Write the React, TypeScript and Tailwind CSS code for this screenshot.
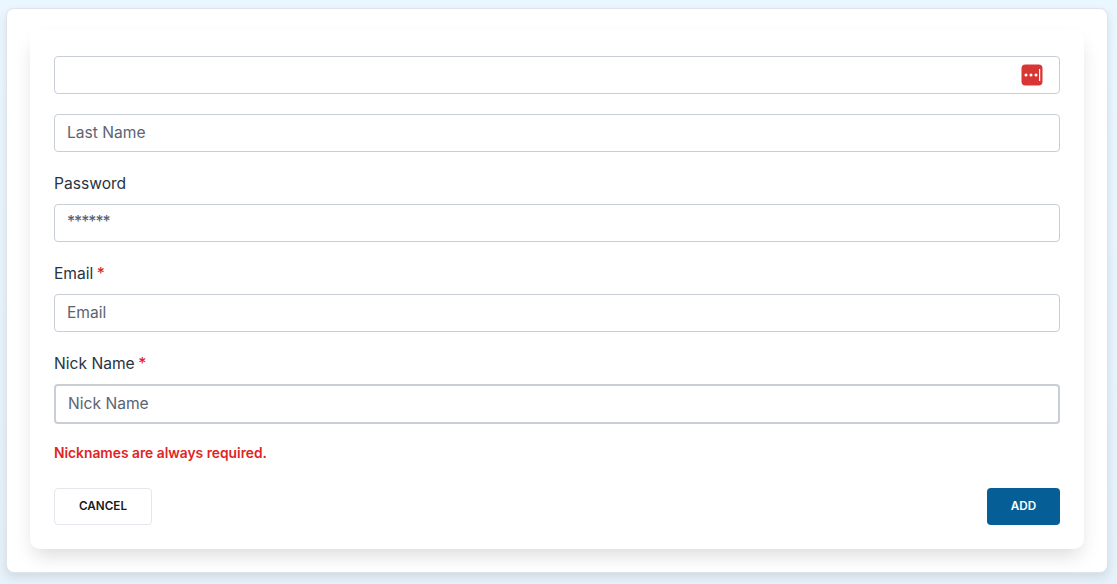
import React from "react";

const fieldFont = "font-['Inter','Liberation_Sans',sans-serif]";

const Label = ({ text, required }: { text: string; required?: boolean }) => (
  <div className="mt-5 h-8 text-[15.6px] leading-[24px] text-[#273444]">
    {text}
    {required && <span className="ml-[3.5px] font-medium text-[#e02424]">*</span>}
  </div>
);

const Input = ({ placeholder, className = "" }: { placeholder?: string; className?: string }) => (
  <div
    className={`flex h-[38px] items-center rounded-[4px] border border-[#c9ced6] bg-white px-3 text-[15.6px] text-[#5b6472] ${className}`}
  >
    {placeholder}
  </div>
);

const PasswordManagerIcon = () => (
  <svg width="22" height="22" viewBox="0 0 22 22" className="absolute right-[17px] top-[8px]">
    <rect x="0.5" y="0.5" width="21" height="21" rx="4" fill="#d73634" />
    <circle cx="5" cy="11" r="1.5" fill="#fff" />
    <circle cx="10" cy="11" r="1.5" fill="#fff" />
    <circle cx="15" cy="11" r="1.5" fill="#fff" />
    <rect x="18" y="5" width="1.2" height="12" fill="#fff" />
  </svg>
);

export default function App() {
  return (
    <div className={`h-[584px] w-[1117px] overflow-hidden bg-gradient-to-b from-[#ebf7fe] to-[#e6f1f9] pl-[6px] pr-[9px] pt-[8px] ${fieldFont}`}>
      <div className="h-[565px] rounded-[8px] border border-[#dfe4ea] bg-white px-[23px] pt-[21px] shadow-[0_4px_8px_rgba(30,60,90,0.12)]">
        <div className="h-[519px] rounded-[10px] bg-white px-6 pt-[26px] shadow-[0_10px_20px_-4px_rgba(0,0,0,0.15)]">
          <div className="relative">
            <Input />
            <PasswordManagerIcon />
          </div>
          <Input placeholder="Last Name" className="mt-5" />
          <Label text="Password" />
          <Input className="items-start pt-[5px] text-[13px] font-medium tracking-[-1px]" placeholder="******" />
          <Label text="Email" required />
          <Input placeholder="Email" />
          <Label text="Nick Name" required />
          <Input placeholder="Nick Name" className="h-[40px] border-2" />
          <div className="mt-[19px] text-[13.8px] font-semibold leading-[20px] text-[#e02424]">
            Nicknames are always required.
          </div>
          <div className="mt-[25px] flex items-center justify-between">
            <button className="h-[37px] w-[98px] rounded-[4px] border border-[#e4e7eb] bg-white text-[11.7px] font-semibold text-[#1a1a1a]">
              CANCEL
            </button>
            <button className="h-[37px] w-[73px] rounded-[4px] bg-[#065e96] text-[11.7px] font-semibold text-white">
              ADD
            </button>
          </div>
        </div>
      </div>
    </div>
  );
}
